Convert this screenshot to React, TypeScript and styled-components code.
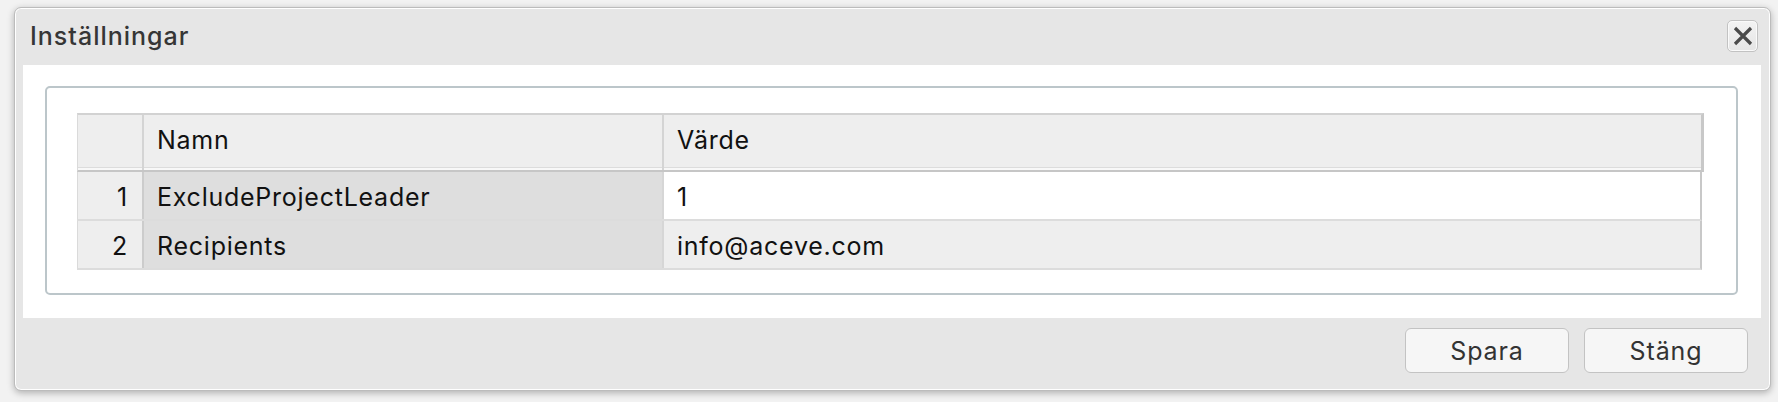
import React from "react";
import styled, { createGlobalStyle } from "styled-components";

const GlobalStyle = createGlobalStyle`
  html, body {
    margin: 0;
    padding: 0;
    background: #f2f2f2;
    font-family: Inter, "Noto Sans", "Liberation Sans", sans-serif;
  }
  * { box-sizing: border-box; }
`;

const Page = styled.div`
  width: 1778px;
  height: 402px;
  padding: 7px 7px 11px 14px;
`;

const Dialog = styled.div`
  width: 1757px;
  height: 384px;
  display: flex;
  flex-direction: column;
  background: #e6e6e6;
  border: 1px solid #bcbcbc;
  border-radius: 7px;
  box-shadow: inset 0 0 0 1px #ffffff, 0 2px 7px rgba(0, 0, 0, 0.28);
  overflow: hidden;
`;

const TitleBar = styled.div`
  height: 57px;
  flex: none;
  display: flex;
  align-items: center;
  justify-content: space-between;
  padding: 0 12px 0 15px;
`;

const Title = styled.div`
  font-size: 25px;
  font-weight: 500;
  color: #363636;
  letter-spacing: 1px;
  margin-top: -2px;
`;

const CloseButton = styled.button`
  width: 31px;
  height: 32px;
  padding: 0;
  display: flex;
  align-items: center;
  justify-content: center;
  background: linear-gradient(#f3f3f3, #e4e4e4);
  border: 1px solid #c2c2c2;
  border-radius: 5px;
  box-shadow: inset 0 0 0 1px #fafafa;
  cursor: pointer;
  margin-top: -1px;
`;

const Content = styled.div`
  flex: none;
  height: 253px;
  margin: 0 9px 0 8px;
  background: #ffffff;
  padding: 21px 23px 23px 22px;
`;

const Fieldset = styled.div`
  height: 209px;
  border: 2px solid #bcc6ca;
  border-radius: 5px;
  padding: 25px 32px 0 30px;
`;

const Table = styled.div`
  display: flex;
  flex-direction: column;
`;

const HeaderRow = styled.div`
  display: grid;
  grid-template-columns: 66px 520px 1fr;
  height: 59px;
  background: #eeeeee;
  border-top: 2px solid #d2d2d2;
  border-left: 1px solid #dadada;
  border-right: 3px solid #c8c8c8;
  border-bottom: 2px solid #c6c6c6;
  box-shadow: inset 0 -2px 0 #f8f8f8, inset 0 -3px 0 #dcdcdc;
`;

const cellText = `
  font-size: 25px;
  letter-spacing: 0.75px;
  color: #111111;
`;

const HeaderCell = styled.div<{ $last?: boolean }>`
  display: flex;
  align-items: center;
  padding: 0 13px 5px;
  ${cellText}
  border-right: ${(p) => (p.$last ? "none" : "2px solid #d4d4d4")};
`;

const BodyRow = styled.div`
  display: grid;
  grid-template-columns: 66px 520px 1fr;
  height: 49px;
  margin-right: 2px;
  border-left: 1px solid #dadada;
  border-right: 2px solid #c8c8c8;
  border-bottom: 2px solid #dcdcdc;
`;

const NumCell = styled.div`
  display: flex;
  align-items: center;
  justify-content: flex-end;
  padding: 2px 14px 0 0;
  ${cellText}
  background: #eeeeee;
  border-right: 2px solid #cccccc;
`;

const NameCell = styled.div`
  display: flex;
  align-items: center;
  padding: 2px 14px 0 13px;
  ${cellText}
  background: #dedede;
  border-right: 2px solid #d6d6d6;
`;

const ValueCell = styled.div<{ $alt?: boolean }>`
  display: flex;
  align-items: center;
  padding: 2px 13px 0;
  ${cellText}
  background: ${(p) => (p.$alt ? "#eeeeee" : "#ffffff")};
`;

const Footer = styled.div`
  flex: 1;
  display: flex;
  justify-content: flex-end;
  align-items: flex-start;
  gap: 15px;
  padding: 10px 22px 0 0;
`;

const Button = styled.button`
  width: 164px;
  height: 45px;
  background: #f6f6f6;
  border: 1.5px solid #c3c3c3;
  border-radius: 6px;
  font-family: Inter, "Noto Sans", "Liberation Sans", sans-serif;
  font-size: 25px;
  letter-spacing: 0.9px;
  color: #333333;
  cursor: pointer;
  padding: 1px 0 0;
`;

const rows = [
  { n: 1, name: "ExcludeProjectLeader", value: "1" },
  { n: 2, name: "Recipients", value: "info@aceve.com" },
];

export default function App() {
  return (
    <>
      <GlobalStyle />
      <Page>
        <Dialog>
          <TitleBar>
            <Title>Inställningar</Title>
            <CloseButton aria-label="Stäng">
              <svg width="24" height="24" viewBox="0 0 24 24">
                <path
                  d="M4 4 L20 20 M20 4 L4 20"
                  stroke="#4a4a4a"
                  strokeWidth="3.2"
                  strokeLinecap="butt"
                  fill="none"
                />
              </svg>
            </CloseButton>
          </TitleBar>
          <Content>
            <Fieldset>
              <Table>
                <HeaderRow>
                  <HeaderCell />
                  <HeaderCell>Namn</HeaderCell>
                  <HeaderCell $last>Värde</HeaderCell>
                </HeaderRow>
                {rows.map((r, i) => (
                  <BodyRow key={r.n}>
                    <NumCell>{r.n}</NumCell>
                    <NameCell>{r.name}</NameCell>
                    <ValueCell $alt={i % 2 === 1}>{r.value}</ValueCell>
                  </BodyRow>
                ))}
              </Table>
            </Fieldset>
          </Content>
          <Footer>
            <Button>Spara</Button>
            <Button>Stäng</Button>
          </Footer>
        </Dialog>
      </Page>
    </>
  );
}
